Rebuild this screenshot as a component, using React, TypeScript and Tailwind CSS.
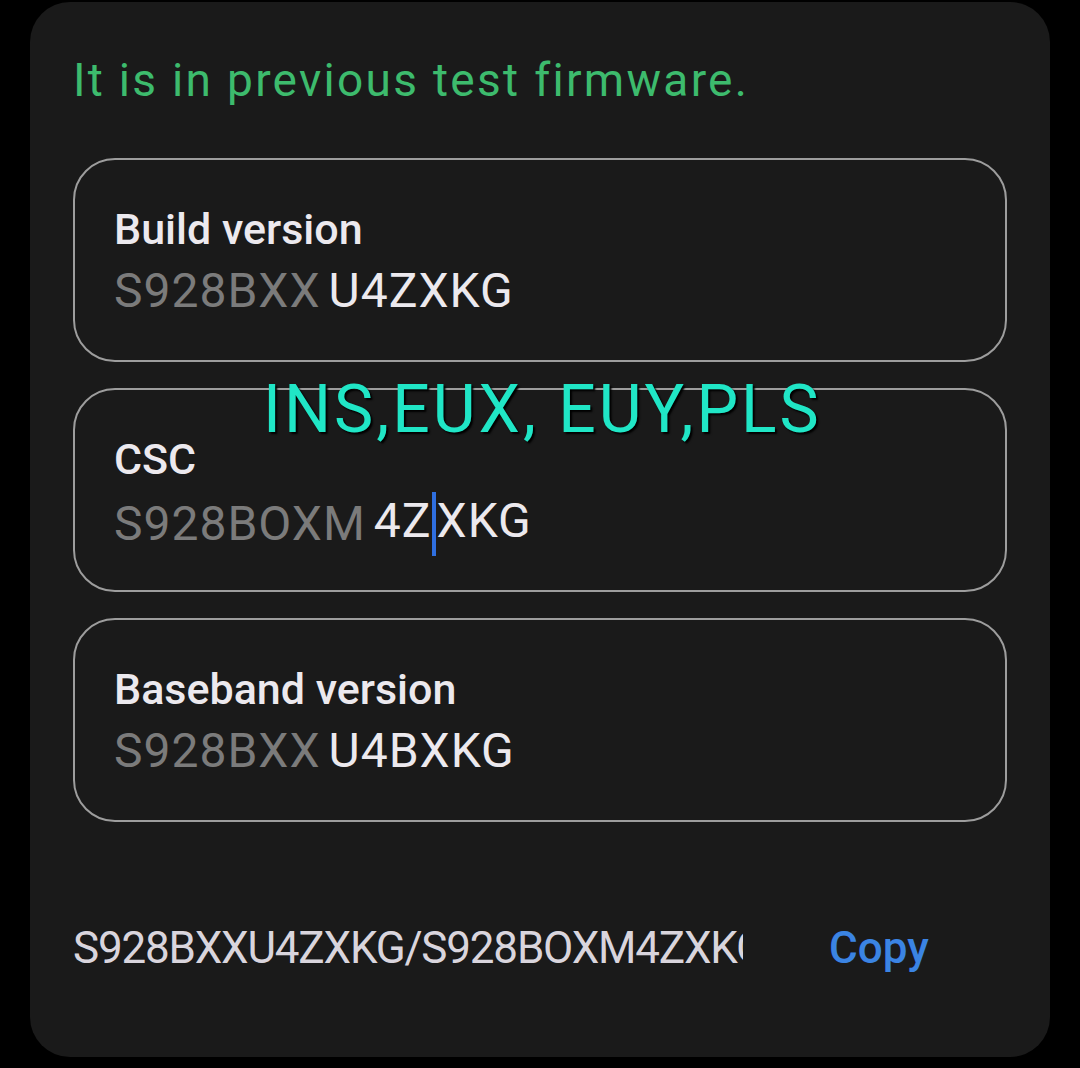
import React from "react";

const rows = [
  { label: "Build version", prefix: "S928BXX", value: "U4ZXKG" },
  { label: "CSC", prefix: "S928BOXM", value: "4ZXKG", cursor: true },
  { label: "Baseband version", prefix: "S928BXX", value: "U4BXKG" },
];

function InfoBox({ label, prefix, value, cursor }: { label: string; prefix: string; value: string; cursor?: boolean }) {
  return (
    <div className="h-[204px] rounded-[42px] border-2 border-[#9d9d9d] pl-[39px] pt-[44px]">
      <div className="text-[43px] leading-[50px] font-medium text-[#ece9ee]">{label}</div>
      <div className="mt-[8px] flex items-center text-[48px] leading-[58px] tracking-[1px]">
        <span className="text-[#7b7b7b]">{prefix}</span>
        <span className="ml-[8px] text-[#ece9ee]">
          {cursor ? (
            <>
              4Z
              <span className="inline-block w-[4px] h-[64px] bg-[#2f6fe0] align-middle mr-[1px]" />
              XKG
            </>
          ) : (
            value
          )}
        </span>
      </div>
    </div>
  );
}

export default function App() {
  return (
    <div className="min-h-[1068px] w-[1080px] bg-black pt-[2px] pl-[30px]" style={{ fontFamily: "Roboto, 'Noto Sans', sans-serif" }}>
      <div className="relative w-[1020px] h-[1055px] rounded-[40px] bg-[#1a1a1a] px-[43px] pt-[50px]">
        <p className="text-[46px] leading-[56px] text-[#3dbb6d] tracking-[2.3px]">It is in previous test firmware.</p>

        <div className="mt-[50px] flex flex-col gap-[26px] w-[934px]">
          {rows.map((r) => (
            <InfoBox key={r.label} {...r} />
          ))}
        </div>

        <div className="mt-[100px] flex items-center">
          <span className="w-[670px] overflow-hidden whitespace-nowrap text-[44px] leading-[52px] text-[#d9d5dd] tracking-[-1.2px]">
            S928BXXU4ZXKG/S928BOXM4ZXKG
          </span>
          <span className="ml-[86px] text-[44px] leading-[52px] font-medium text-[#3b84e3]">Copy</span>
        </div>

        {/* overlay text */}
        <div
          className="absolute left-[233px] top-[370px] text-[66px] leading-[76px] text-[#20e6c6] whitespace-nowrap tracking-[3px]"
          style={{ textShadow: "2px 2px 2px #000" }}
        >
          INS,EUX, EUY,PLS
        </div>
      </div>
    </div>
  );
}
